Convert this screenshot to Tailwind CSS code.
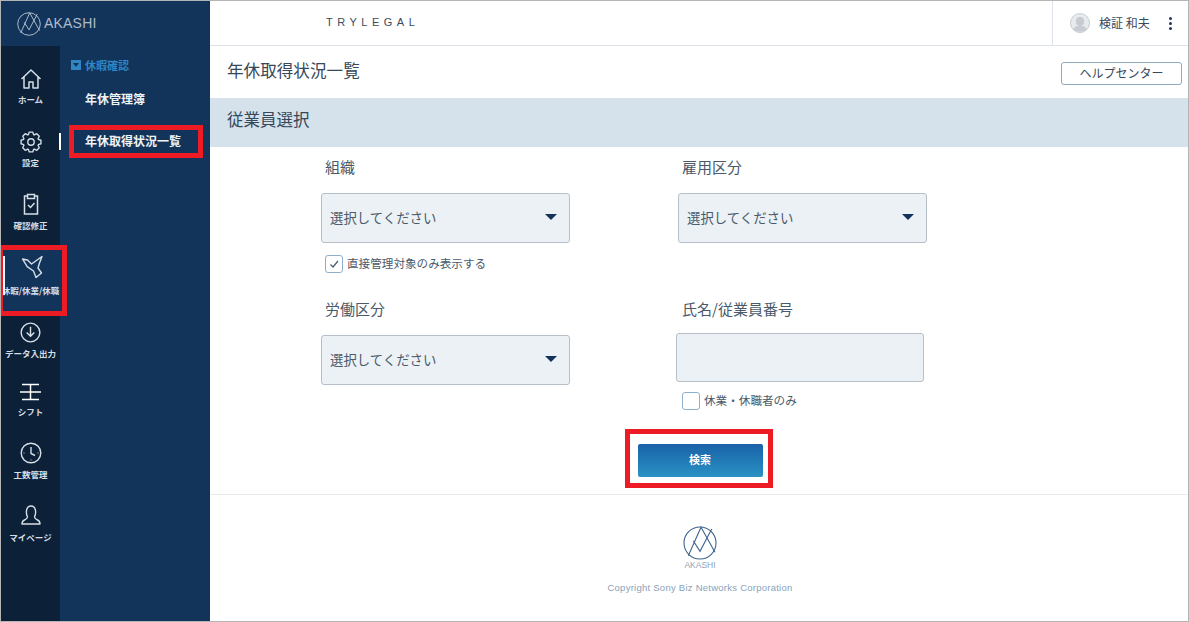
<!DOCTYPE html>
<html lang="ja">
<head>
  <meta charset="UTF-8" />
  <title>年休取得状況一覧</title>
  <script src="https://cdn.jsdelivr.net/npm/@tailwindcss/browser@4"></script>
</head>
<body class="w-[1189px] h-[622px] overflow-hidden bg-white font-['Noto_Sans_CJK_JP','Noto_Sans',sans-serif]">
  <div class="relative w-full h-full flex border border-[#b5b5b5]">

    <!-- Left navigation -->
    <aside class="w-[209px] shrink-0 flex flex-col bg-[#12335a]">
      <div class="h-[45px] shrink-0 flex items-center pl-4 gap-[3px]">
        <svg class="w-[24px] h-[24px]" viewBox="0 0 34 34" fill="none" stroke="#b9c6d4" stroke-width="1.300"><circle cx="17" cy="17" r="16"/><path d="M5.300 29.700 18 1.300l14 25M10.300 14.700 17 25.300 28.700 3"/></svg>
        <span class="font-['Liberation_Sans',sans-serif] text-[14px] tracking-[0.2px] text-[#aebccb]">AKASHI</span>
      </div>
      <div class="flex-1 flex">
        <nav class="relative w-[59px] shrink-0 bg-[#0c2038] flex flex-col items-center text-[8.500px] font-bold text-[#d6dee6] leading-none">
          <span class="absolute left-0 top-[199px] w-full h-[71px] bg-[#12335a]"></span>
          <span class="absolute -right-px top-[87px] w-[2px] h-[17px] bg-white"></span>
          <span class="absolute left-[2px] top-[210px] z-10 w-[2px] h-[39px] bg-white"></span>
          <div class="h-[63px] w-full flex flex-col items-center pt-[22px] gap-[5px]">
            <svg class="w-[22px] h-[22px]" viewBox="0 0 22 22" fill="none" stroke="#d6dee6" stroke-width="1.500" stroke-linejoin="round"><path d="M1.500 11 11 2l9.500 9M4 9v11h5v-6h4v6h5V9"/></svg>
            <span class="whitespace-nowrap">ホーム</span>
          </div>
          <div class="h-[63px] w-full flex flex-col items-center pt-[22px] gap-[5px]">
            <svg class="w-[22px] h-[22px]" viewBox="0 0 24 24" fill="none" stroke="#d6dee6" stroke-width="1.500" stroke-linejoin="round"><circle cx="12" cy="12" r="3.500"/><path d="M9.090 4.010 10.090 1.170H13.910L14.910 4.010 15.590 4.300 18.310 2.990 21.010 5.690 19.700 8.410 19.990 9.090 22.830 10.090V13.910L19.990 14.910 19.700 15.590 21.010 18.310 18.310 21.010 15.590 19.700 14.910 19.990 13.910 22.830H10.090L9.090 19.990 8.410 19.700 5.690 21.010 2.990 18.310 4.300 15.590 4.010 14.910 1.170 13.910V10.090L4.010 9.090 4.300 8.410 2.990 5.690 5.690 2.990 8.410 4.300Z"/></svg>
            <span>設定</span>
          </div>
          <div class="h-[63px] w-full flex flex-col items-center pt-[21px] gap-[6px]">
            <svg class="w-[22px] h-[22px]" viewBox="0 0 22 22" fill="none" stroke="#d6dee6" stroke-width="1.500"><path d="M7 3H4.500v18h13V3H15M7.500 1.500h7v4h-7z"/><path d="m8 12 2.500 2.500L14.500 10"/></svg>
            <span class="whitespace-nowrap">確認修正</span>
          </div>
          <div class="relative h-[65px] w-full flex flex-col items-center pt-[20px] gap-[7px]">
            <svg class="w-[24px] h-[24px]" viewBox="0 0 24 24" fill="none" stroke="#d6dee6" stroke-width="1.400" stroke-linejoin="round"><path d="M3.500 4 8.500 5 12.500 9 23 1.500 20.500 8 19 13 22.500 18 17 22.500 14.500 16 8.200 11.700Z"/></svg>
            <span class="whitespace-nowrap">休暇/休業/休職</span>
          </div>
          <div class="h-[65px] w-full flex flex-col items-center pt-[22px] gap-[6px]">
            <svg class="w-[21px] h-[21px]" viewBox="0 0 22 22" fill="none" stroke="#d6dee6" stroke-width="1.500"><circle cx="11" cy="11" r="9.800"/><path d="M11 5v10M7 11l4 4 4-4"/></svg>
            <span class="whitespace-nowrap">データ入出力</span>
          </div>
          <div class="h-[60px] w-full flex flex-col items-center pt-[18px] gap-[6px]">
            <svg class="w-[21px] h-[18px]" viewBox="0 0 21 18" fill="none" stroke="#fff" stroke-width="1.500"><path d="M2 1.500h17M0 9h21M2 16.500h17M10.500 1.500v15"/></svg>
            <span>シフト</span>
          </div>
          <div class="h-[62px] w-full flex flex-col items-center pt-[17px] gap-[6px]">
            <svg class="w-[22px] h-[22px]" viewBox="0 0 22 22" fill="none" stroke="#d6dee6" stroke-width="1.400"><circle cx="11" cy="11" r="9.800"/><path d="M11 5v6.500l4 2"/><path d="M11 17.500v1M3.500 11h1M17.500 11h1" stroke-width="1"/></svg>
            <span class="whitespace-nowrap">工数管理</span>
          </div>
          <div class="w-full flex flex-col items-center pt-[17px] gap-[7px]">
            <svg class="w-[22px] h-[22px]" viewBox="0 0 22 22" fill="none" stroke="#d6dee6" stroke-width="1.400" stroke-linejoin="round"><path d="M7.500 13C5.500 9 6 2 11 2s5.500 7 3.500 11c0 1.500 1 2 3 3 2 .8 2.500 2 2.500 4H2c0-2 .5-3.200 2.500-4 2-1 3-1.500 3-3Z"/></svg>
            <span class="whitespace-nowrap">マイページ</span>
          </div>
        </nav>
        <div class="flex-1 flex flex-col pl-[11px] pt-[12px]">
          <div class="flex items-center gap-[4px] text-[11px] font-bold text-[#2f86c2] leading-[14px]">
            <span class="w-[10px] h-[10px] bg-[#2f86c2] flex items-center justify-center"><span class="border-x-[3px] border-x-transparent border-t-[4px] border-t-[#12335a]"></span></span>
            休暇確認
          </div>
          <a class="mt-[19px] ml-[14px] text-[12px] font-bold text-[#f0f3f6] leading-[16px]">年休管理簿</a>
          <a class="mt-[26px] ml-[14px] text-[12px] font-bold text-[#f0f3f6] leading-[16px]">年休取得状況一覧</a>
        </div>
      </div>
    </aside>

    <!-- Main area -->
    <main class="flex-1 flex flex-col min-w-0">
      <header class="h-[45px] shrink-0 flex items-center border-b border-[#dde3e8]">
        <span class="ml-[116px] -mt-[1px] font-['Liberation_Sans',sans-serif] text-[11px] tracking-[4.500px] text-[#3c4a58]">TRYLEGAL</span>
        <div class="ml-auto h-full w-[136px] flex items-center border-l border-[#dde3e8] pl-[17px]">
          <span class="relative w-[20px] h-[20px] rounded-full border border-[#c6ccd2] bg-[#e8ebee] overflow-hidden">
            <span class="absolute left-[5px] top-[3px] w-[8px] h-[9px] rounded-full bg-[#c6ccd2]"></span>
            <span class="absolute left-[2px] top-[12px] w-[14px] h-[10px] rounded-full bg-[#c6ccd2]"></span>
          </span>
          <span class="ml-[9px] text-[12px] text-[#37495c]">検証 和夫</span>
          <span class="ml-[19px] flex flex-col gap-[2px]">
            <i class="w-[3px] h-[3px] rounded-full bg-[#1e3a5f]"></i>
            <i class="w-[3px] h-[3px] rounded-full bg-[#1e3a5f]"></i>
            <i class="w-[3px] h-[3px] rounded-full bg-[#1e3a5f]"></i>
          </span>
        </div>
      </header>

      <div class="h-[52px] shrink-0 flex items-center justify-between pl-[17px] pr-[6px]">
        <h1 class="-mt-[3px] text-[16.600px] font-normal text-[#36485a]">年休取得状況一覧</h1>
        <button class="mt-[2px] w-[121px] h-[23px] border border-[#8fa9bf] rounded-[3px] text-[12px] leading-none text-[#37495c]">ヘルプセンター</button>
      </div>

      <h2 class="h-[49px] shrink-0 flex items-center pl-[17px] pb-[6px] bg-[#d5e2ec] text-[16.500px] font-normal text-[#36485a]">従業員選択</h2>

      <!-- Search form -->
      <form class="grid grid-cols-[357px_250px] pl-[111px] pt-[8px]">
        <div class="h-[142px]">
          <label class="block ml-[4px] text-[15px] leading-[24px] text-[#4a5a6a]">組織</label>
          <div class="mt-[14px] w-[249px] h-[50px] flex items-center justify-between pl-[8px] pr-[12px] pb-[2px] bg-[#ecf1f5] border border-[#b6bfc7] rounded-[3px] text-[13.400px] text-[#4a5a6a]">選択してください<span class="border-x-[6px] border-x-transparent border-t-[6px] border-t-[#12335a]"></span></div>
          <label class="mt-[12px] ml-[4px] flex items-center gap-[4px] text-[11.600px] leading-[18px] text-[#4a5a6a]">
            <span class="w-[18px] h-[18px] flex items-center justify-center border border-[#8fb0cc] rounded-[3px]">
              <svg class="w-[10px] h-[10px]" viewBox="0 0 10 10" fill="none" stroke="#4a5a6a" stroke-width="1.200"><path d="m1.500 5.500 2.500 2.500 5-6"/></svg>
            </span>
            <span class="-mt-[2px]">直接管理対象のみ表示する</span>
          </label>
        </div>
        <div class="h-[142px]">
          <label class="block ml-[4px] text-[15px] leading-[24px] text-[#4a5a6a]">雇用区分</label>
          <div class="mt-[14px] w-[249px] h-[50px] flex items-center justify-between pl-[8px] pr-[12px] pb-[2px] bg-[#ecf1f5] border border-[#b6bfc7] rounded-[3px] text-[13.400px] text-[#4a5a6a]">選択してください<span class="border-x-[6px] border-x-transparent border-t-[6px] border-t-[#12335a]"></span></div>
        </div>
        <div>
          <label class="block ml-[4px] text-[15px] leading-[24px] text-[#4a5a6a]">労働区分</label>
          <div class="mt-[14px] w-[249px] h-[50px] flex items-center justify-between pl-[8px] pr-[12px] pb-[2px] bg-[#ecf1f5] border border-[#b6bfc7] rounded-[3px] text-[13.400px] text-[#4a5a6a]">選択してください<span class="border-x-[6px] border-x-transparent border-t-[6px] border-t-[#12335a]"></span></div>
        </div>
        <div class="-ml-[2px]">
          <label class="block ml-[6px] text-[15px] leading-[24px] text-[#4a5a6a]">氏名/従業員番号</label>
          <div class="mt-[12px] w-[248px] h-[49px] bg-[#ecf1f5] border border-[#b6bfc7] rounded-[3px]"></div>
          <label class="mt-[10px] ml-[6px] flex items-center gap-[4px] text-[11.600px] leading-[18px] text-[#4a5a6a]">
            <span class="w-[18px] h-[18px] border border-[#8fb0cc] rounded-[3px]"></span>
            <span class="-mt-[2px]">休業・休職者のみ</span>
          </label>
        </div>
      </form>

      <div class="flex justify-center pl-[2px] pt-[34px]">
        <button class="w-[125px] h-[33px] pb-[3px] rounded-[2px] bg-gradient-to-b from-[#1a62a8] to-[#2b92c3] text-[11px] font-bold text-white">検索</button>
      </div>

      <!-- Footer -->
      <footer class="mt-[17px] flex-1 border-t border-[#e6ebef] flex flex-col items-center pl-[2px] pt-[31px]">
        <svg class="w-[34px] h-[34px]" viewBox="0 0 34 34" fill="none" stroke="#3d6590" stroke-width="1.100"><circle cx="17" cy="17" r="16"/><path d="M5.300 29.700 18 1.300l14 25M10.300 14.700 17 25.300 28.700 3"/></svg>
        <span class="font-['Liberation_Sans',sans-serif] text-[8.500px] leading-[10px] text-[#8fa3b8]">AKASHI</span>
        <span class="mt-[11px] font-['Liberation_Sans',sans-serif] text-[9.500px] tracking-[0.25px] leading-[14px] text-[#8aa2bb]">Copyright Sony Biz Networks Corporation</span>
      </footer>
    </main>

    <!-- Red annotation boxes -->
    <div class="absolute left-[68px] top-[124px] w-[134px] h-[33px] border-[5px] border-[#ed1c24]"></div>
    <div class="absolute left-[0px] top-[244px] w-[66px] h-[71px] border-[5px] border-l-[2px] border-[#ed1c24]"></div>
    <div class="absolute left-[624px] top-[428px] w-[148px] h-[59px] border-[5px] border-[#ed1c24]"></div>
  </div>
</body>
</html>
